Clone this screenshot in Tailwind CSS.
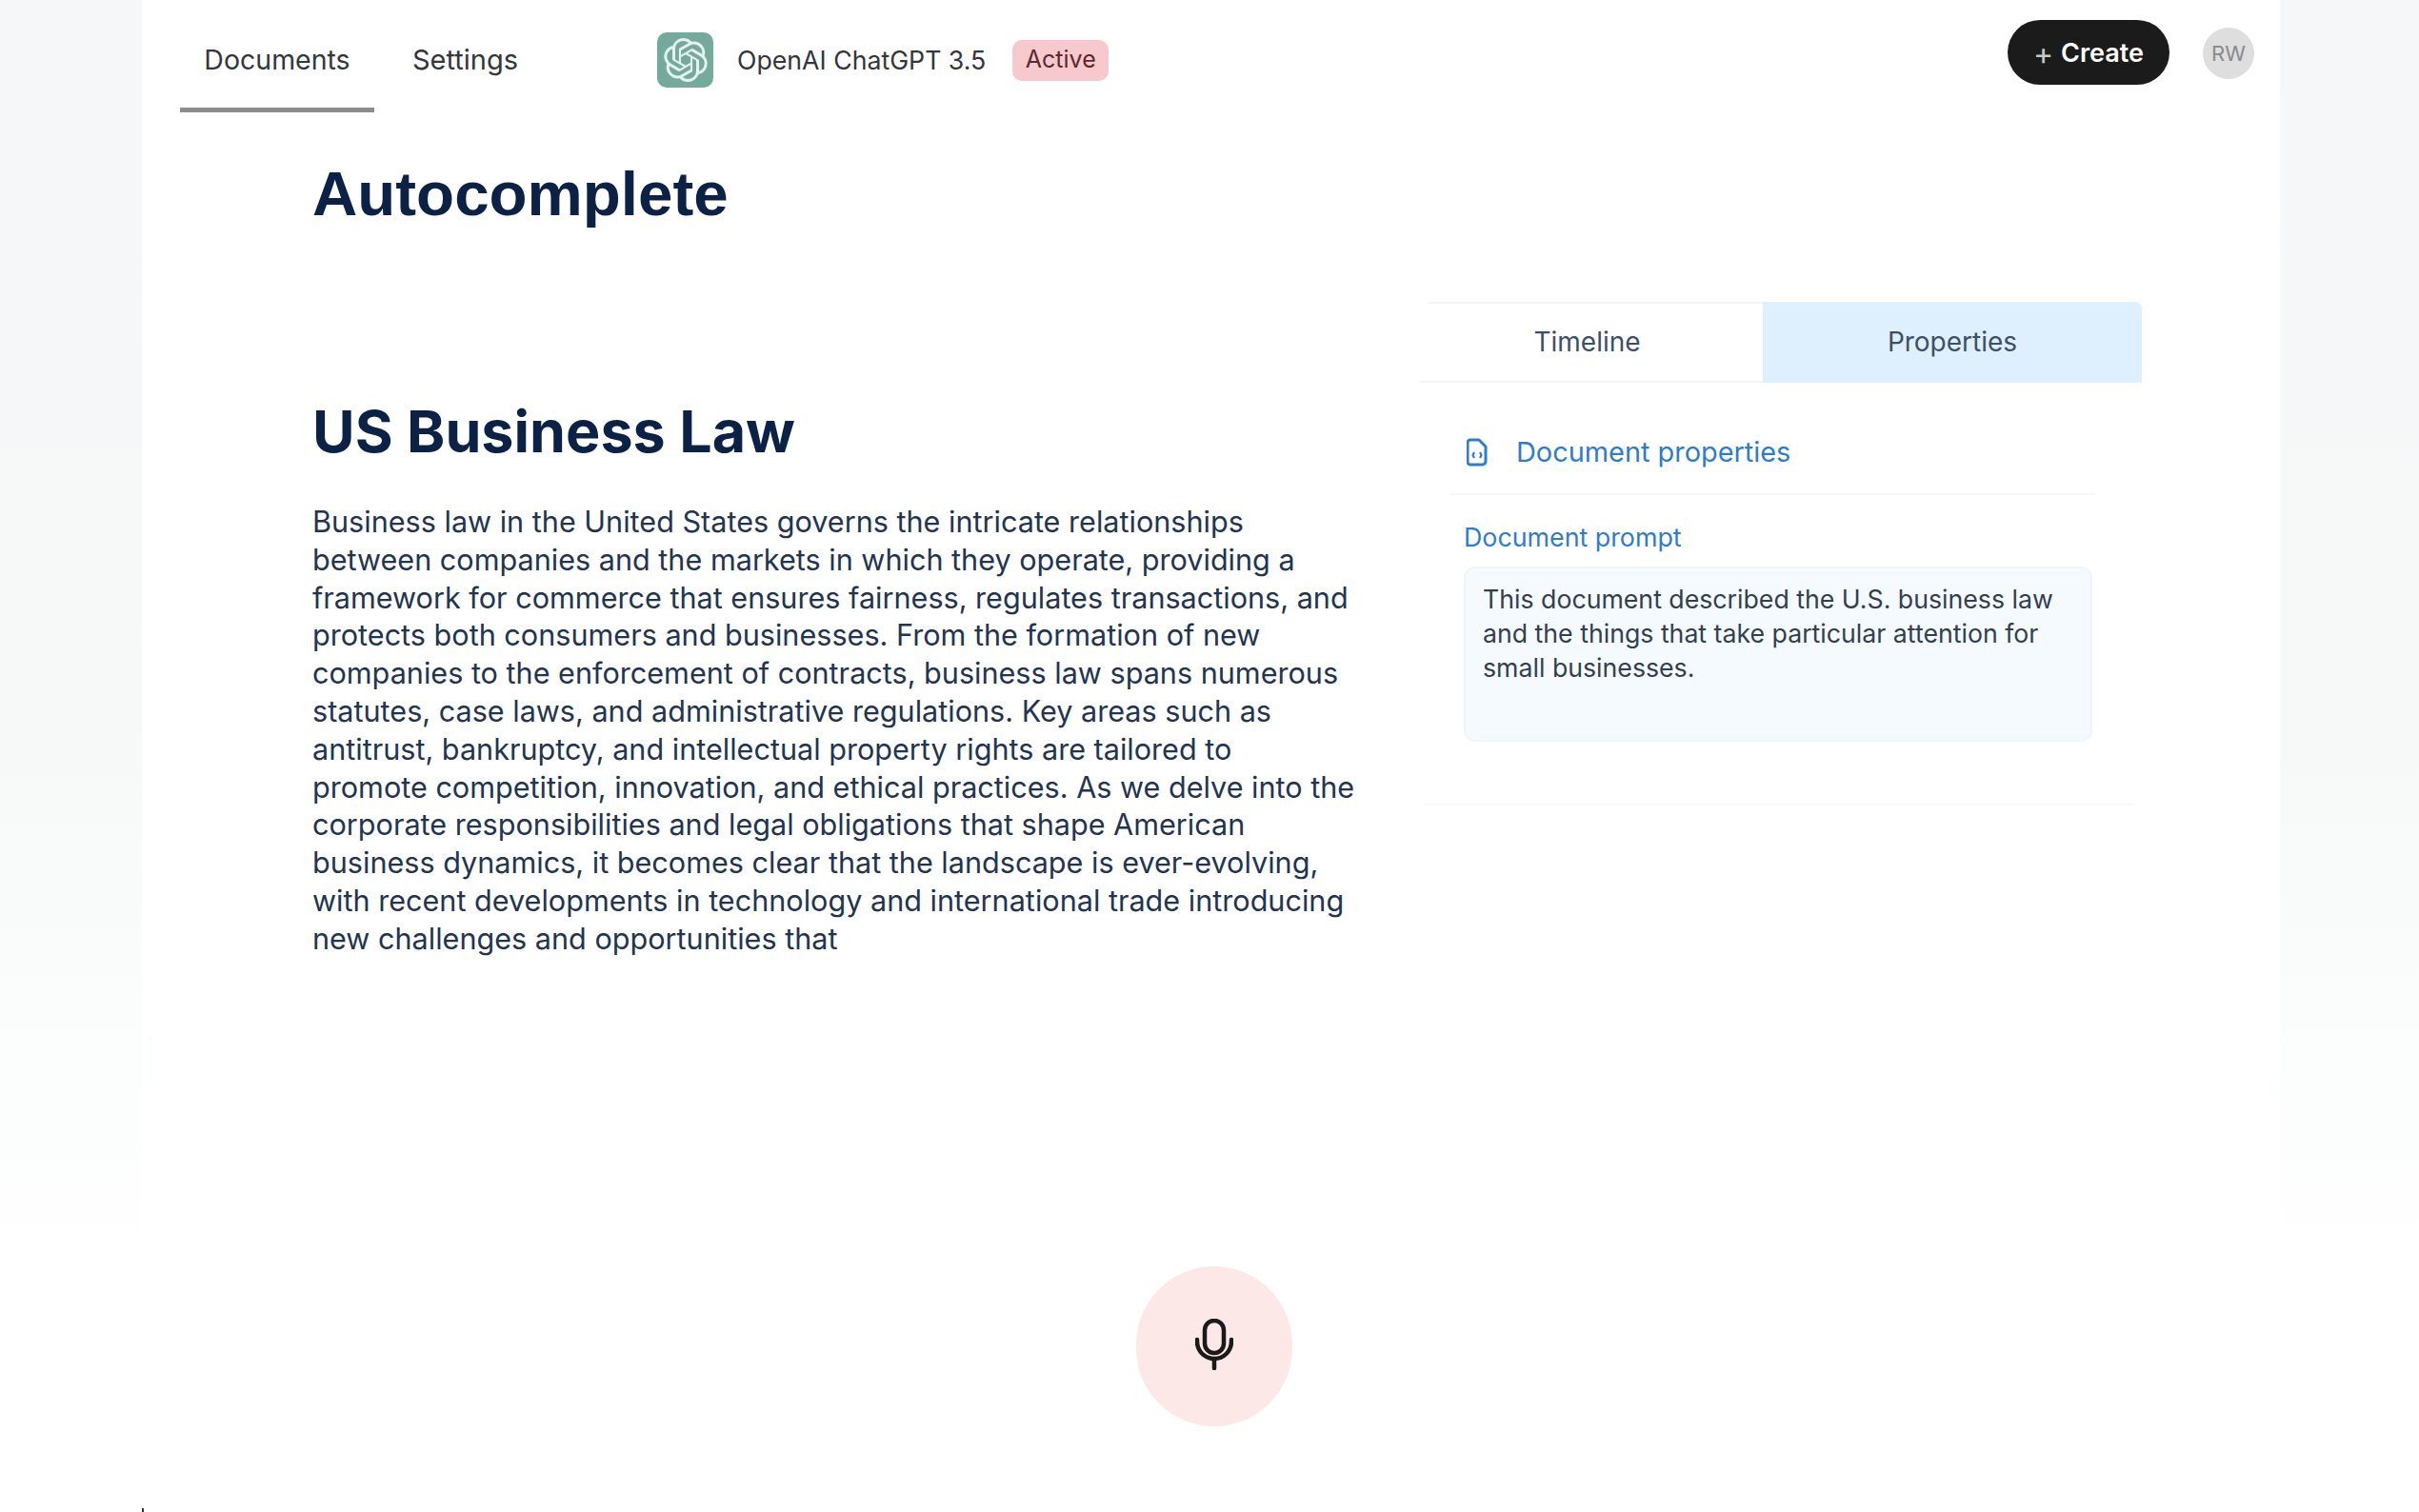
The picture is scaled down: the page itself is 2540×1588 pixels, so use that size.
<!DOCTYPE html>
<html lang="en">
<head>
    <meta charset="UTF-8">
    <title>Autocomplete</title>
    <script src="https://cdn.jsdelivr.net/npm/@tailwindcss/browser@4"></script>
</head>
<body class="bg-white font-['Inter',sans-serif]">
    <div class="relative h-[1588px] w-[2540px] overflow-hidden bg-gradient-to-b from-[#f6f7f8] via-[#f7f9f9] via-50% to-white to-85%">
        <main class="relative ml-[149px] h-full w-[2245px] bg-white">

            <!-- Top bar -->
            <header class="flex h-[118px] items-start pl-[40px] pr-[27px]">
                <a class="flex h-[118px] w-[204px] justify-center border-b-[5px] border-[#8c8c8c] pt-[45px] text-[28.500px] leading-[36px] text-[#33363b]">Documents</a>
                <a class="ml-[40px] pt-[45px] text-[29px] leading-[36px] text-[#33363b]">Settings</a>
                <div class="ml-[146px] mt-[34px] flex items-center">
                    <div class="flex h-[58px] w-[59px] items-center justify-center rounded-[10px] bg-[#74aa9c]">
                        <svg class="h-[46px] w-[46px]" viewBox="0 0 24 24" fill="#e6f1ee"><path d="M22.2819 9.8211a5.9847 5.9847 0 0 0-.5157-4.9108 6.0462 6.0462 0 0 0-6.5098-2.9A6.0651 6.0651 0 0 0 4.9807 4.1818a5.9847 5.9847 0 0 0-3.9977 2.9 6.0462 6.0462 0 0 0 .7427 7.0966 5.98 5.98 0 0 0 .511 4.9107 6.051 6.051 0 0 0 6.5146 2.9001A5.9847 5.9847 0 0 0 13.2599 24a6.0557 6.0557 0 0 0 5.7718-4.2058 5.9894 5.9894 0 0 0 3.9977-2.9001 6.0557 6.0557 0 0 0-.7475-7.0729zm-9.022 12.6081a4.4755 4.4755 0 0 1-2.8764-1.0408l.1419-.0804 4.7783-2.7582a.7948.7948 0 0 0 .3927-.6813v-6.7369l2.02 1.1686a.071.071 0 0 1 .038.052v5.5826a4.504 4.504 0 0 1-4.4945 4.4944zm-9.6607-4.1254a4.4708 4.4708 0 0 1-.5346-3.0137l.142.0852 4.783 2.7582a.7712.7712 0 0 0 .7806 0l5.8428-3.3685v2.3324a.0804.0804 0 0 1-.0332.0615L9.74 19.9502a4.4992 4.4992 0 0 1-6.1408-1.6464zM2.3408 7.8956a4.485 4.485 0 0 1 2.3655-1.9728V11.6a.7664.7664 0 0 0 .3879.6765l5.8144 3.3543-2.0201 1.1685a.0757.0757 0 0 1-.071 0l-4.8303-2.7865A4.504 4.504 0 0 1 2.3408 7.872zm16.5963 3.8558L13.1038 8.364 15.1192 7.2a.0757.0757 0 0 1 .071 0l4.8303 2.7913a4.4944 4.4944 0 0 1-.6765 8.1042v-5.6772a.79.79 0 0 0-.407-.667zm2.0107-3.0231l-.142-.0852-4.7735-2.7818a.7759.7759 0 0 0-.7854 0L9.409 9.2297V6.8974a.0662.0662 0 0 1 .0284-.0615l4.8303-2.7866a4.4992 4.4992 0 0 1 6.6802 4.66zM8.3065 12.863l-2.02-1.1638a.0804.0804 0 0 1-.038-.0567V6.0742a4.4992 4.4992 0 0 1 7.3757-3.4537l-.142.0805L8.704 5.459a.7948.7948 0 0 0-.3927.6813zm1.0976-2.3654l2.602-1.4998 2.6069 1.4998v2.9994l-2.5974 1.4997-2.6067-1.4997Z"/></svg>
                    </div>
                    <span class="ml-[25px] text-[26.700px] leading-[36px] text-[#33363b]">OpenAI ChatGPT 3.5</span>
                    <span class="ml-[28px] flex h-[43px] w-[101px] items-center justify-center rounded-[10px] bg-[#f8c9cc] text-[25px] text-[#5a2a30]">Active</span>
                </div>
                <button class="ml-auto mt-[21px] flex h-[68px] w-[170px] items-center justify-center gap-[8px] rounded-full bg-[#1b1b1b] pt-[3px] text-[27px] font-semibold text-white">
                    <span class="text-[32px] font-normal text-[#c8c8c8]">+</span> Create
                </button>
                <div class="ml-[35px] mt-[29px] flex h-[54px] w-[54px] items-center justify-center rounded-full bg-[#dedede] text-[22px] text-[#8a8a8a]">RW</div>
            </header>

            <div class="flex pl-[179px]">
                <!-- Document -->
                <section class="w-[1162px] shrink-0">
                    <h1 class="mt-[51px] [font-family:'Liberation_Sans',Arial,sans-serif] text-[65.500px] font-bold leading-[70px] text-[#0b2146]">Autocomplete</h1>
                    <h2 class="mt-[179px] text-[61px] font-bold leading-[70px] text-[#0b2146]">US Business Law</h2>
                    <p class="mt-[40px] w-[1120px] whitespace-nowrap text-[30.600px] leading-[39.800px] text-[#23344f]">Business law in the United States governs the intricate relationships<br>between companies and the markets in which they operate, providing a<br>framework for commerce that ensures fairness, regulates transactions, and<br>protects both consumers and businesses. From the formation of new<br>companies to the enforcement of contracts, business law spans numerous<br>statutes, case laws, and administrative regulations. Key areas such as<br>antitrust, bankruptcy, and intellectual property rights are tailored to<br>promote competition, innovation, and ethical practices. As we delve into the<br>corporate responsibilities and legal obligations that shape American<br>business dynamics, it becomes clear that the landscape is ever-evolving,<br>with recent developments in technology and international trade introducing<br>new challenges and opportunities that</p>
                </section>

                <!-- Properties panel -->
                <aside class="w-[760px] pt-[199px]">
                    <div class="ml-[10px] h-[2px] w-[352px] bg-[#f3f4f5]"></div>
                    <div class="-mt-[2px] flex h-[85px] w-[759px] border-b-2 border-[#f3f4f5] text-[28px] text-[#3d4f68]">
                        <div class="flex w-[361px] items-center justify-center pr-[8px]">Timeline</div>
                        <div class="-mb-[2px] flex w-[398px] items-center justify-center rounded-tr-[8px] bg-[#deeffd] pb-[2px]">Properties</div>
                    </div>
                    <div class="mt-[55px] flex h-[36px] items-center pl-[50px] text-[28.900px] text-[#2f7cc9]">
                        <svg class="h-[30px] w-[22px]" viewBox="0 0 22 30" fill="none" stroke="#2f7cc9" stroke-width="3" stroke-linejoin="round">
                            <path d="M4 2h9l7 7v15.500a3.500 3.500 0 0 1-3.500 3.500h-12.500a3 3 0 0 1-3-3v-20a3 3 0 0 1 3-3z"/>
                            <path d="M8 15l-1.500 3 1.500 3M14 15l1.500 3-1.500 3" stroke-width="2.200"/>
                        </svg>
                        <span class="ml-[30px]">Document properties</span>
                    </div>
                    <div class="ml-[32px] mt-[25px] w-[678px] border-t-2 border-[#f5f8fa]"></div>
                    <label class="mt-[31px] block pl-[47px] text-[26.800px] leading-[26px] text-[#2f7cc9]">Document prompt</label>
                    <div class="ml-[47px] mt-[18px] h-[184px] w-[660px] rounded-[12px] border-2 border-[#eef6fc] bg-[#f4fafe] px-[18px] pt-[14px] text-[26.700px] leading-[36px] text-[#333f4e]">This document described the U.S. business law<br>and the things that take particular attention for<br>small businesses.</div>
                    <div class="ml-[5px] mt-[65px] w-[745px] border-t-2 border-[#f5f8fa]"></div>
                </aside>
            </div>

            <!-- Floating mic button -->
            <button class="absolute left-[1044px] top-[1330px] flex h-[168px] w-[164px] items-center justify-center rounded-full bg-[#fde8e8]">
                <svg class="-mt-[4px] h-[54px] w-[40px]" viewBox="0 0 40 54" fill="none" stroke="#1a1a1a" stroke-width="4.500" stroke-linecap="round">
                    <rect x="10" y="2" width="20" height="34" rx="10"/>
                    <path d="M2 22v2a18 18 0 0 0 36 0v-2M20 42v10"/>
                </svg>
            </button>
        </main>
        <div class="absolute bottom-0 left-[149px] h-[4px] w-[2px] bg-[#333]"></div>
    </div>
</body>
</html>
